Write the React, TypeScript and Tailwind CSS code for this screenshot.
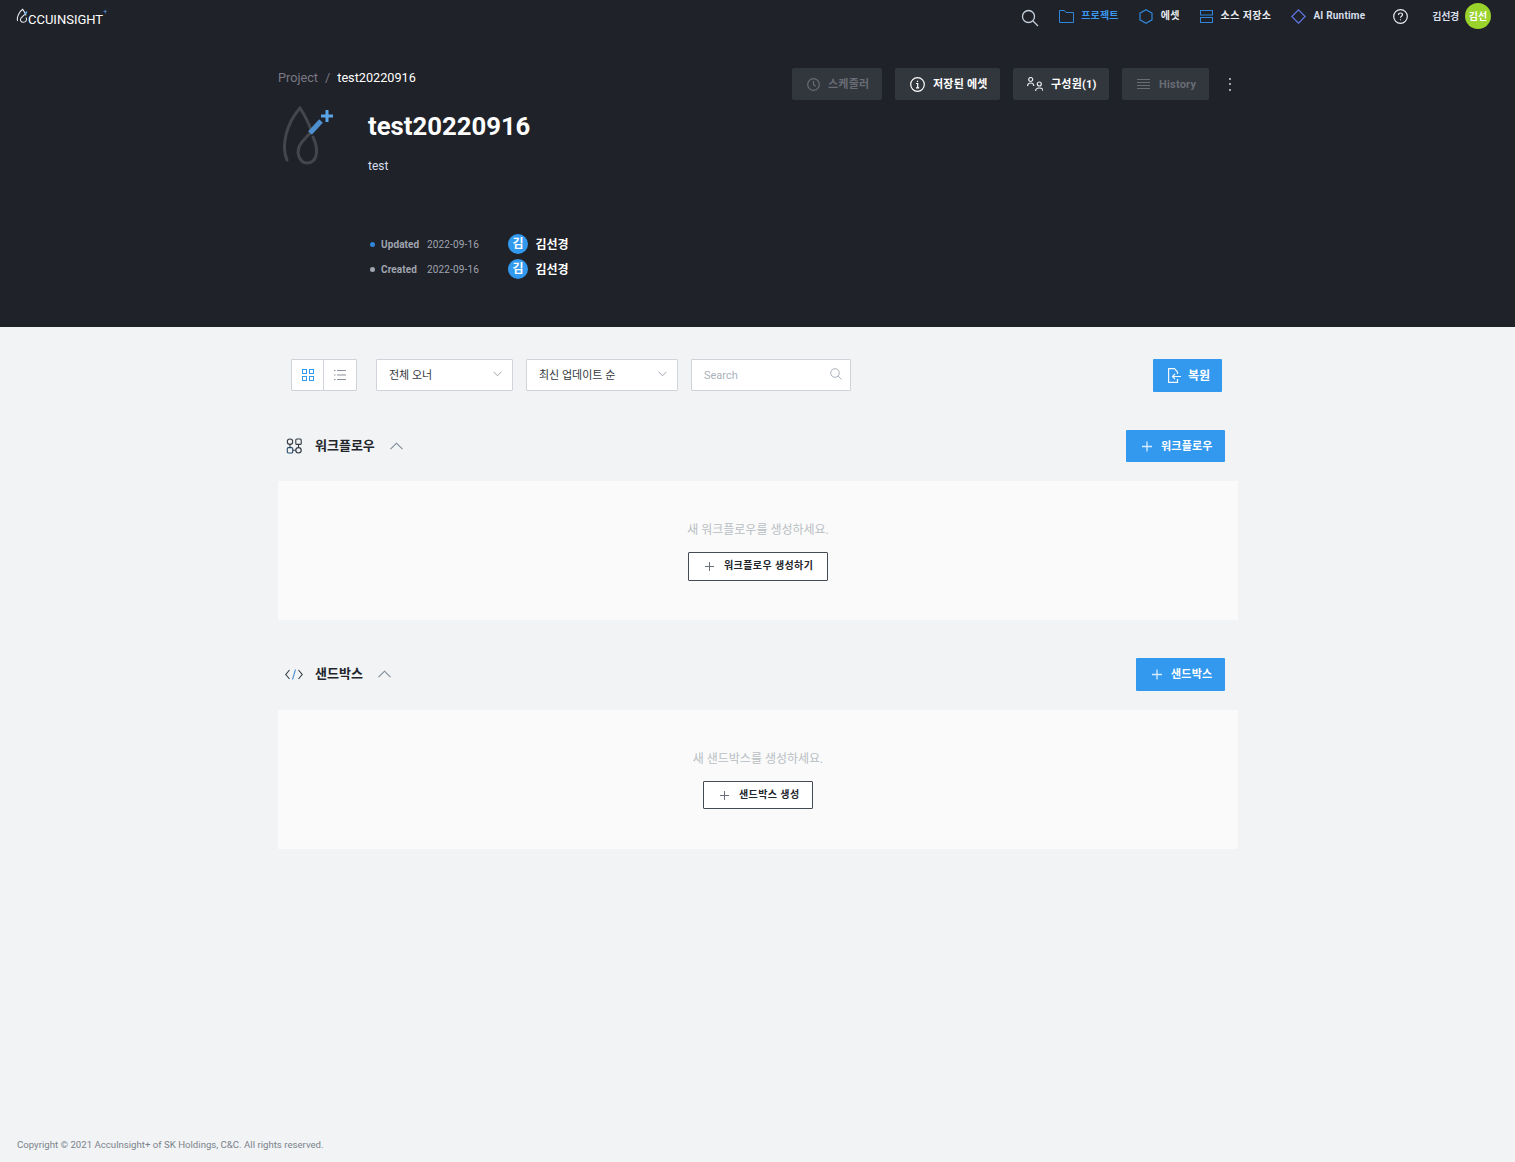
import { ReactNode } from 'react';

const font = "[font-family:Roboto,'Noto_Sans_CJK_KR',sans-serif]";

function Logo() {
  return (
    <div className="flex items-end text-white">
      <svg width="12" height="16" viewBox="0 0 12 16" fill="none">
        <path d="M1.500 13C.5 9 3 4 6.700 1.300 8 3 9.500 5.500 10 7.500" stroke="#e5e7eb" strokeWidth="1.100" />
        <path d="M10.700 4.300 5 10C3.500 12 5 14.300 7.300 14.300 10 14.300 11.500 12 10 9.500" stroke="#e5e7eb" strokeWidth="1.100" />
        <path d="M8.500 6.500 11 3.500" stroke="#5aa5e8" strokeWidth="1.300" />
      </svg>
      <span className="text-[13px] leading-[15px] -mb-[3px]">CCUINSIGHT</span>
      <span className="text-[7px] leading-[7px] text-[#5aa5e8] self-start mt-[1px]">+</span>
    </div>
  );
}

function NavItem({ icon, label, className, gap }: { icon: ReactNode; label: string; className: string; gap: string }) {
  return (
    <div className={`flex items-center ${gap}`}>
      {icon}
      <span className={`text-[10px] font-bold leading-[14px] -mt-[1px] tracking-[0.2px] ${className}`}>{label}</span>
    </div>
  );
}

function Navbar() {
  return (
    <div className="flex items-start justify-between h-[40px] pl-[16px] pr-[24px]">
      <div className="pt-[8px]">
        <Logo />
      </div>
      <div className="flex items-center h-[32px] text-white">
        <svg width="18" height="18" viewBox="0 0 18 18" fill="none" stroke="#c4d0dc" strokeWidth="1.300" className="mt-[3px] mr-[20px]">
          <circle cx="7.500" cy="7.500" r="6" />
          <path d="M12 12l5 5" />
        </svg>
        <div className="mr-[20px]">
          <NavItem
            label="프로젝트"
            gap="gap-[7px]"
            className="text-[#3a97ee]"
            icon={
              <svg width="15" height="13" viewBox="0 0 15 13" fill="none" stroke="#2f86d8" strokeWidth="1">
                <path d="M.5 12.500V.5h5l1.500 2h7.500v10z" />
              </svg>
            }
          />
        </div>
        <div className="mr-[20px]">
          <NavItem
            label="에셋"
            gap="gap-[8px]"
            className="text-[#e8ecf0]"
            icon={
              <svg width="14" height="15" viewBox="0 0 14 15" fill="none" stroke="#2f86d8" strokeWidth="1.200">
                <path d="M7 .8l6 3.400v6.600l-6 3.400-6-3.400V4.200z" />
              </svg>
            }
          />
        </div>
        <div className="mr-[20px]">
          <NavItem
            label="소스 저장소"
            gap="gap-[7px]"
            className="text-[#e8ecf0] tracking-[0.4px]"
            icon={
              <svg width="14" height="13" viewBox="0 0 14 13" fill="none" stroke="#2f86d8" strokeWidth="1">
                <rect x=".5" y=".5" width="12" height="4.500" />
                <rect x=".5" y="7.500" width="12" height="5" />
              </svg>
            }
          />
        </div>
        <div className="mr-[28px]">
          <NavItem
            label="AI Runtime"
            gap="gap-[7px]"
            className="text-[#d6deea]"
            icon={
              <svg width="15" height="15" viewBox="0 0 15 15" fill="none" stroke="#6077e6" strokeWidth="1.200">
                <path d="M7.500.8l6.700 6.700-6.700 6.700L.8 7.500z" />
              </svg>
            }
          />
        </div>
        <svg width="15" height="15" viewBox="0 0 15 15" fill="none" stroke="#e8ecf0" strokeWidth="1.200" className="mr-[24px]">
          <circle cx="7.500" cy="7.500" r="6.800" />
          <path d="M5.500 6c0-1.300.9-2 2-2s2 .7 2 1.800c0 1.500-2 1.500-2 3" />
          <path d="M7.500 10.300v1" />
        </svg>
        <span className="text-[10px] font-bold tracking-[-0.3px] text-[#d6deea] mr-[6px]">김선경</span>
        <div className="w-[26px] h-[26px] rounded-full bg-[#9ad32c] flex items-center justify-center text-[10px] font-bold">
          김선
        </div>
      </div>
    </div>
  );
}

function HeaderButton({ icon, label, muted, className }: { icon: ReactNode; label: string; muted?: boolean; className: string }) {
  return (
    <div className={`h-[32px] bg-[#32373e] rounded-[2px] flex items-center text-[11px] tracking-[0.2px] font-bold ${muted ? 'text-[#686c74]' : 'text-white'} ${className}`}>
      {icon}
      <span className="pt-[2px]">{label}</span>
    </div>
  );
}

function MetaRow({ dot, label }: { dot: string; label: string }) {
  return (
    <div className="flex items-center h-[20px]">
      <span className={`w-[5px] h-[5px] rounded-full ml-[1.500px] ${dot}`} />
      <span className="text-[10px] font-bold tracking-[0.1px] text-[#a0a5b0] ml-[6.500px] w-[46px]">{label}</span>
      <span className="text-[10px] text-[#a0a5b0] w-[81px] tracking-[0.15px]">2022-09-16</span>
      <div className="w-[20px] h-[20px] rounded-full bg-[#3399ee] text-white flex items-center justify-center text-[12px] font-bold">김</div>
      <span className="text-[12px] font-bold text-white ml-[7.500px] pt-[1px]">김선경</span>
    </div>
  );
}

function ProjectHeader() {
  return (
    <div className="h-[327px] bg-[#1f2228]">
      <Navbar />
      <div className="w-[960px] ml-[278px]">
        <div className="flex items-start justify-between pr-[4px] pt-[28px]">
          <div className="text-[12.700px] leading-[20px] flex">
            <span className="text-[#7b7886]">Project</span>
            <span className="text-[#7b7886] mx-[7px]">/</span>
            <span className="text-white">test20220916</span>
          </div>
          <div className="flex items-center">
            <HeaderButton
              muted
              label="스케줄러"
              className="w-[90px] pl-[15px] gap-[8px] mr-[13px]"
              icon={
                <svg width="13" height="13" viewBox="0 0 13 13" fill="none" stroke="#686c74" strokeWidth="1.200">
                  <circle cx="6.500" cy="6.500" r="5.800" />
                  <path d="M6.500 3v3.800l2.200 1.500" />
                </svg>
              }
            />
            <HeaderButton
              label="저장된 에셋"
              className="w-[105px] pl-[15px] gap-[8px] mr-[13px]"
              icon={
                <svg width="15" height="15" viewBox="0 0 15 15" fill="none" stroke="#fff" strokeWidth="1.200">
                  <circle cx="7.500" cy="7.500" r="6.800" />
                  <path d="M6 6.500h1.700v4M6 10.800h3.200M7.500 3.800v1.200" />
                </svg>
              }
            />
            <HeaderButton
              label="구성원(1)"
              className="w-[96px] pl-[14px] gap-[8px] mr-[13px]"
              icon={
                <svg width="16" height="14" viewBox="0 0 16 14" fill="none" stroke="#e8ecf0" strokeWidth="1.200">
                  <circle cx="3.700" cy="2.500" r="2" />
                  <path d="M.6 9c0-2 1.300-3 3.100-3s3.100 1 3.100 3" />
                  <circle cx="12.300" cy="7" r="2" />
                  <path d="M8.600 14c0-2 1.600-3 3.700-3s3.700 1 3.700 3" />
                </svg>
              }
            />
            <HeaderButton
              muted
              label="History"
              className="w-[87px] pl-[15px] gap-[9px] mr-[20px]"
              icon={
                <svg width="13" height="12" viewBox="0 0 13 12" fill="none" stroke="#686c74" strokeWidth="1">
                  <path d="M0 1.500h13M0 4.500h13M0 7.500h13M0 10.500h13" />
                </svg>
              }
            />
            <div className="flex flex-col gap-[3.500px] mr-[3px]">
              <span className="w-[2px] h-[2px] bg-[#a0a5b0]" />
              <span className="w-[2px] h-[2px] bg-[#a0a5b0]" />
              <span className="w-[2px] h-[2px] bg-[#a0a5b0]" />
            </div>
          </div>
        </div>
        <div className="flex mt-[4px]">
          <div className="w-[90px] shrink-0">
            <svg width="60" height="62" viewBox="0 0 60 62" fill="none">
              <path d="M9 56C3 42 8 20 22 4 26 10 31 20 34 28" stroke="#44464b" strokeWidth="3" strokeLinecap="round" />
              <path d="M42 18 24 38C16 48 22 59 29 59 38 59 42 48 35 33" stroke="#44464b" strokeWidth="3" strokeLinecap="round" />
              <path d="M32 29 43 17" stroke="#4e8fd0" strokeWidth="5" />
              <path d="M49 6v12M43 12h12" stroke="#5aa5e8" strokeWidth="3" />
            </svg>
          </div>
          <div>
            <div className="text-[25.700px] font-bold leading-[36px] text-white mt-[4px]">test20220916</div>
            <div className="text-[12px] leading-[18px] text-[#d6deea] mt-[13px]">test</div>
            <div className="mt-[59px] flex flex-col gap-[5px]">
              <MetaRow dot="bg-[#2f86d8]" label="Updated" />
              <MetaRow dot="bg-[#a0a5b0]" label="Created" />
            </div>
          </div>
        </div>
      </div>
    </div>
  );
}

function Select({ label, w }: { label: string; w: string }) {
  return (
    <div className={`h-[32px] bg-white border border-[#d0d4da] rounded-[1px] flex items-center justify-between pl-[12px] pr-[10.500px] text-[11px] text-[#33373d] ${w}`}>
      <span className="pt-[2px]">{label}</span>
      <svg width="9" height="6" viewBox="0 0 9 6" fill="none" stroke="#a0a8b0" className="-mt-[2px]">
        <path d="M.5.800l4 4 4-4" />
      </svg>
    </div>
  );
}

function Toolbar() {
  return (
    <div className="flex items-start justify-between pl-[13px] pr-[16px]">
      <div className="flex items-center">
        <div className="flex h-[32px] w-[66px] bg-white border border-[#d0d4da] rounded-[1px] mr-[19px]">
          <div className="w-[32px] border-r border-[#d0d4da] flex items-center justify-center">
            <svg width="12" height="12" viewBox="0 0 12 12" fill="none" stroke="#3399ee">
              <rect x=".5" y=".5" width="4" height="4" />
              <rect x="7.500" y=".5" width="4" height="4" />
              <rect x=".5" y="7.500" width="4" height="4" />
              <rect x="7.500" y="7.500" width="4" height="4" />
            </svg>
          </div>
          <div className="flex-1 flex items-center justify-center">
            <svg width="12" height="10" viewBox="0 0 12 10" fill="none" stroke="#8b929c">
              <path d="M3 .5h9M3 5h9M3 9.500h9M0 .5h1.500M0 5h1.500M0 9.500h1.500" />
            </svg>
          </div>
        </div>
        <Select label="전체 오너" w="w-[137px] mr-[13px]" />
        <Select label="최신 업데이트 순" w="w-[152px] mr-[13px]" />
        <div className="h-[32px] w-[160px] bg-white border border-[#d0d4da] rounded-[1px] flex items-center justify-between pl-[12px] pr-[8px] text-[11px] text-[#aab2ba]">
          <span className="pt-[2px]">Search</span>
          <svg width="12" height="12" viewBox="0 0 12 12" fill="none" stroke="#aab2ba" className="-mt-[2px]">
            <circle cx="5" cy="5" r="4.300" />
            <path d="M8 8l3.500 3.500" />
          </svg>
        </div>
      </div>
      <div className="h-[33px] w-[69px] bg-[#3399ee] rounded-[1px] flex items-center pl-[15px] gap-[7px] text-white text-[12px] font-bold">
        <svg width="13" height="15" viewBox="0 0 13 15" fill="none" stroke="#f2f8fe" strokeWidth="1.200">
          <path d="M9.500 6V4L6.500.6H.6v13.800h8.900V11" />
          <path d="M13 8.500H4.500M7 6 4.500 8.500 7 11" />
        </svg>
        <span>복원</span>
      </div>
    </div>
  );
}

function SectionHead({ icon, title, action, className }: { icon: ReactNode; title: string; action: string; className: string }) {
  return (
    <div className="flex items-center justify-between pl-[7px] pr-[13px]">
      <div className="flex items-center -mt-[1px]">
        <div className="w-[30px] flex items-center">{icon}</div>
        <span className="text-[13px] font-bold text-[#22262b]">{title}</span>
        <svg width="13" height="8" viewBox="0 0 13 8" fill="none" stroke="#7e8a96" strokeWidth="1.100" className="ml-[15px]">
          <path d="M.5 7.200l6-6 6 6" />
        </svg>
      </div>
      <div className={`bg-[#3399ee] rounded-[1px] flex items-center pl-[16px] gap-[9px] text-white text-[11px] tracking-[0.2px] font-bold ${className}`}>
        <svg width="10" height="11" viewBox="0 0 10 11" fill="none" stroke="#d8ecfc" strokeWidth="1.300">
          <path d="M5 .5v10M0 5.500h10" />
        </svg>
        <span className="pt-[2px]">{action}</span>
      </div>
    </div>
  );
}

function EmptyPanel({ text, action, btn }: { text: string; action: string; btn: string }) {
  return (
    <div className="h-[139px] bg-[#fafafa] mt-[19px] flex flex-col items-center pt-[40px]">
      <div className="text-[12px] leading-[18px] text-[#b8bec4]">{text}</div>
      <div className={`mt-[13px] pl-[16px] bg-white border border-[#454b55] rounded-[1px] flex items-center gap-[10px] text-[10px] tracking-[0.4px] font-bold text-[#22262b] ${btn}`}>
        <svg width="9" height="9" viewBox="0 0 9 9" fill="none" stroke="#6a707a">
          <path d="M4.500 0v9M0 4.500h9" />
        </svg>
        <span className="-mt-[2px]">{action}</span>
      </div>
    </div>
  );
}

export default function App() {
  return (
    <div className={`min-h-[1162px] bg-[#f1f3f5] flex flex-col ${font}`}>
      <ProjectHeader />
      <div className="w-[960px] ml-[278px] pt-[32px]">
        <Toolbar />
        <div className="mt-[38px]">
          <SectionHead
            title="워크플로우"
            action="워크플로우"
            className="w-[99px] h-[32px]"
            icon={
              <svg width="16" height="16" viewBox="0 0 16 16" fill="none" stroke="#333a44" strokeWidth="1.100" className="ml-[1px]">
                <circle cx="4" cy="3.700" r="2.700" />
                <rect x="9.800" y="1" width="5.400" height="5.400" rx="1" />
                <rect x="1.300" y="9.600" width="5.400" height="5.400" rx="1" stroke="#2a4a6e" />
                <circle cx="12.500" cy="12.300" r="2.700" />
                <path d="M4 6.400v3.200M12.500 6.400v3.200M6.700 12.300h3.100" />
              </svg>
            }
          />
          <EmptyPanel text="새 워크플로우를 생성하세요." action="워크플로우 생성하기" btn="w-[140px] h-[29px]" />
        </div>
        <div className="mt-[38px]">
          <SectionHead
            title="샌드박스"
            action="샌드박스"
            className="w-[89px] h-[33px]"
            icon={
              <svg width="18" height="11" viewBox="0 0 18 11" fill="none" stroke="#333a44" strokeWidth="1.100">
                <path d="M4.500 1 .8 5.500 4.500 10M13.500 1l3.700 4.500-3.700 4.500" />
                <path d="M10.500.5 7.500 10.500" stroke="#4e8fd0" />
              </svg>
            }
          />
          <EmptyPanel text="새 샌드박스를 생성하세요." action="샌드박스 생성" btn="w-[110px] h-[28px]" />
        </div>
      </div>
      <div className="mt-auto pl-[17px] pb-[10px] text-[9.650px] leading-[14px] text-[#7b838c]">
        Copyright © 2021 Acculnsight+ of SK Holdings, C&amp;C. All rights reserved.
      </div>
    </div>
  );
}
